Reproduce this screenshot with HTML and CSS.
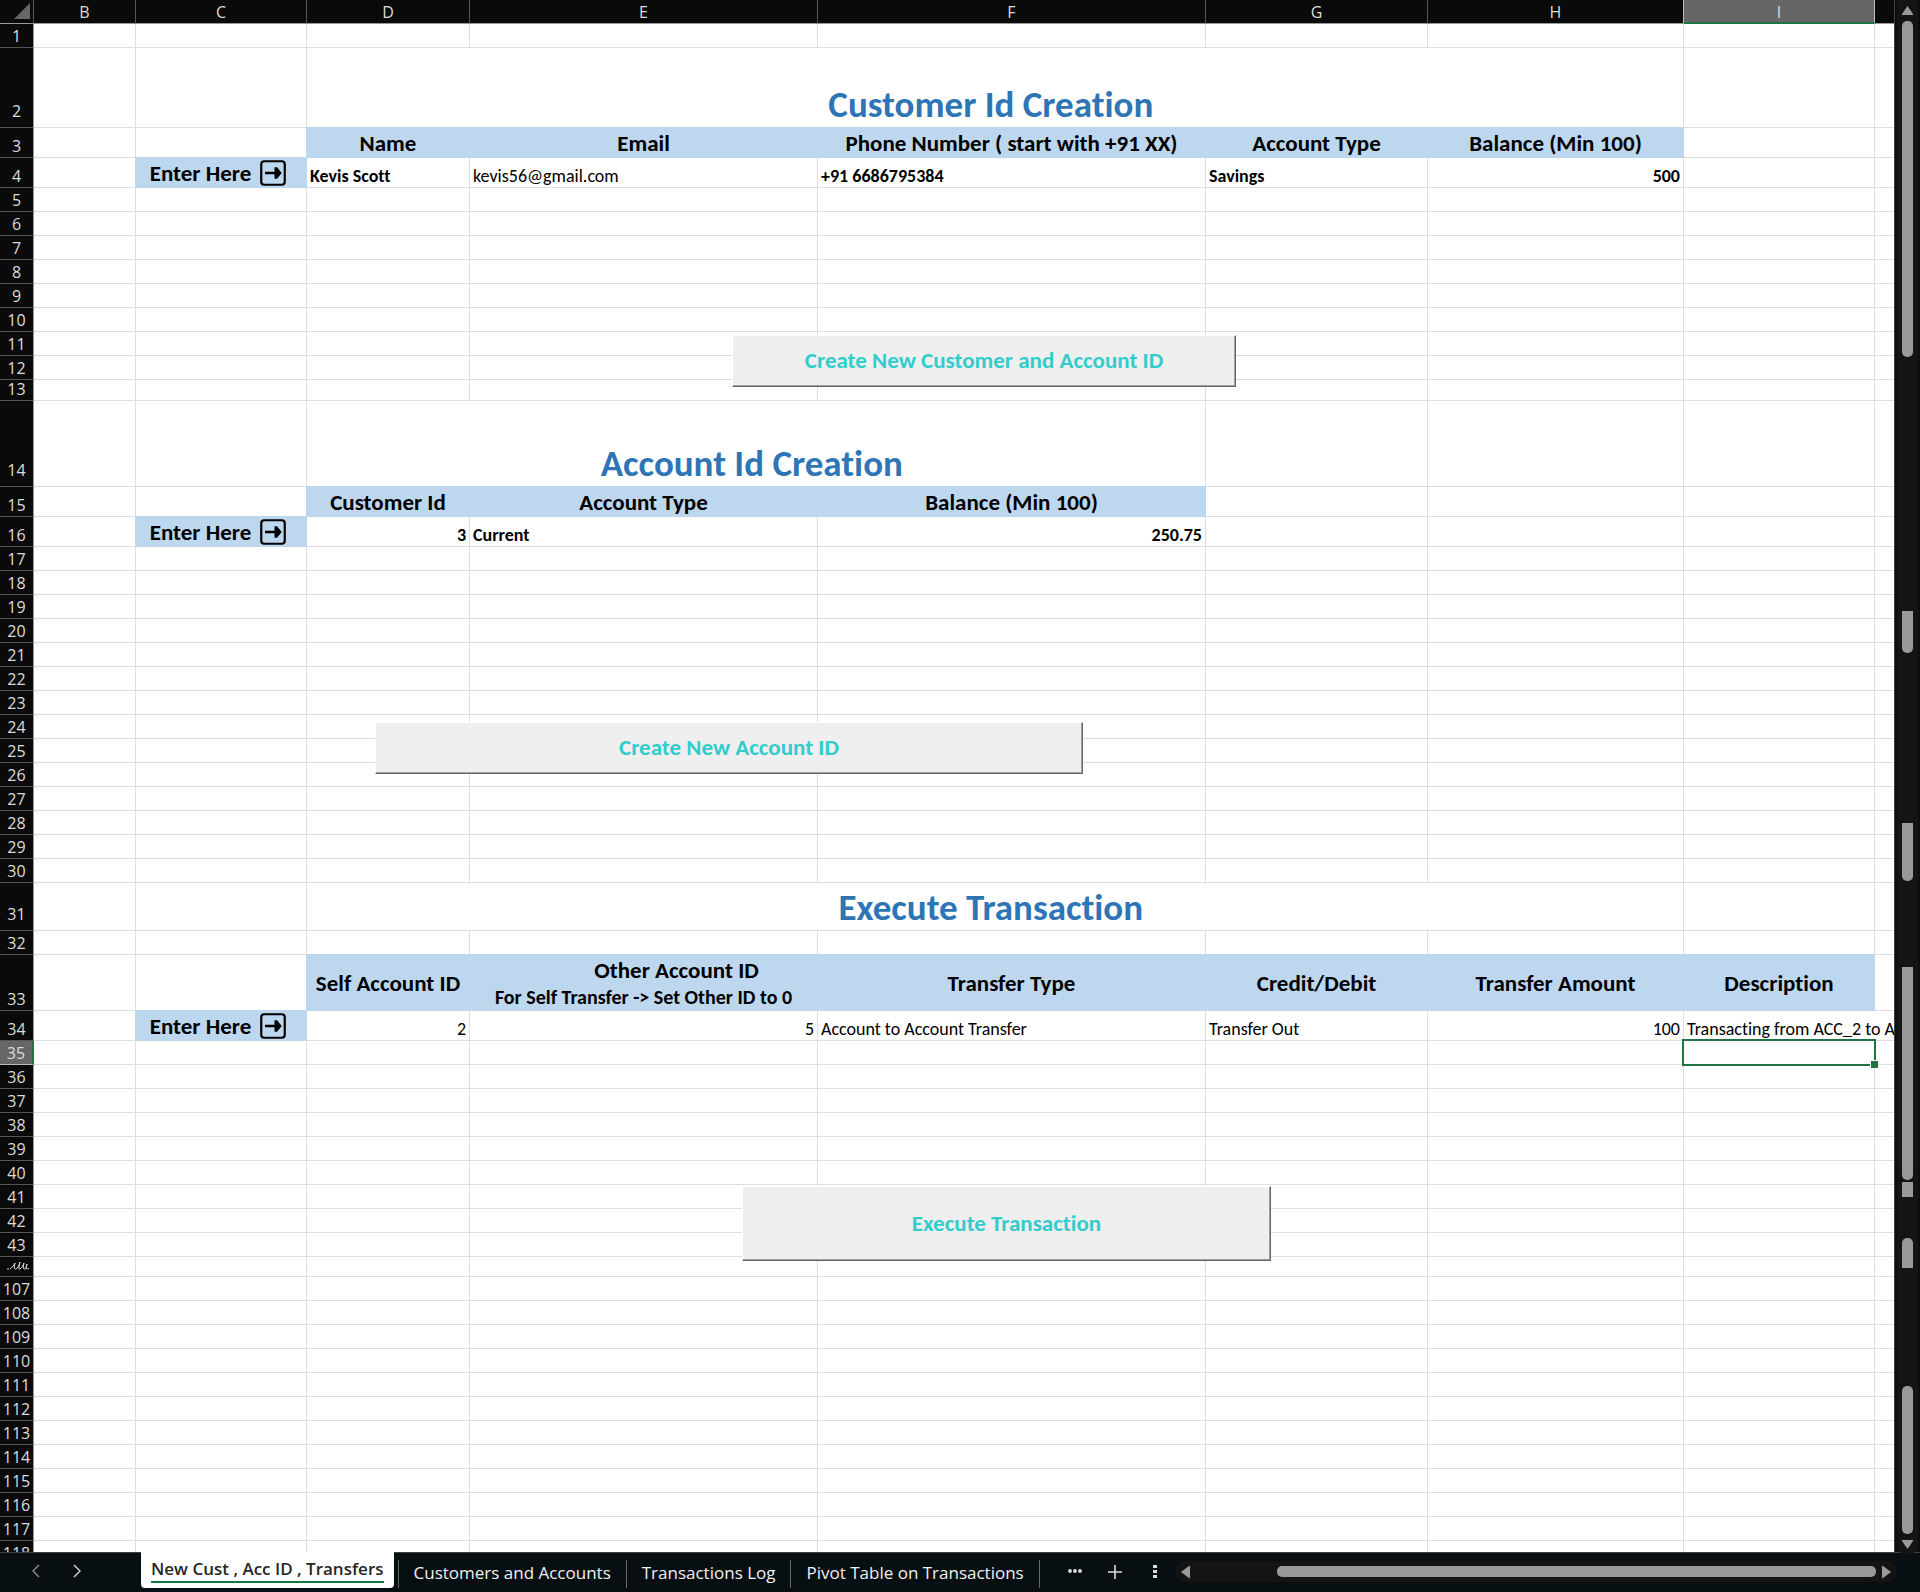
FILE: index.html
```html
<!DOCTYPE html>
<html lang="en">
<head>
<meta charset="utf-8">
<meta name="viewport" content="width=device-width, initial-scale=1">
<title>New Cust , Acc ID , Transfers</title>
<link rel="stylesheet" href="styles.css">
</head>
<body>
<svg class="defs" aria-hidden="true">
  <symbol id="enter-arrow" viewBox="0 0 26 26">
    <rect x="1.25" y="1.25" width="23.5" height="23.5" rx="3" fill="none" stroke="#000" stroke-width="2.2"/>
    <path d="M5 11.7h9.500V7.200h2.600l4.600 5.800-4.600 5.800h-2.600v-4.500H5z" fill="#000"/>
  </symbol>
</svg>
<div class="app">
  <main class="sheet">
    <table class="grid">
      <colgroup>
        <col class="col-head"><col class="col-b"><col class="col-c"><col class="col-d"><col class="col-e">
        <col class="col-f"><col class="col-g"><col class="col-h"><col class="col-i"><col>
      </colgroup>
      <thead>
        <tr>
          <th class="corner" aria-label="Select all"><svg width="16" height="16" viewBox="0 0 16 16" aria-hidden="true"><path d="M16 0v16H0z" fill="#666"/></svg></th>
          <th scope="col">B</th><th scope="col">C</th><th scope="col">D</th><th scope="col">E</th><th scope="col">F</th><th scope="col">G</th><th scope="col" class="before-active">H</th><th scope="col" class="active">I</th><th class="last"></th>
        </tr>
      </thead>
      <tbody>
        <tr><th>1</th><td><td><td><td><td><td><td><td><td></tr>
        <tr class="h80"><th>2</th><td><td><td colspan="5" class="title">Customer Id Creation&nbsp;<td><td></tr>
        <tr class="h30"><th>3</th><td><td><td class="field">Name<td class="field">Email<td class="field">Phone Number ( start with +91 XX)<td class="field">Account Type<td class="field">Balance (Min 100)<td><td></tr>
        <tr class="h30"><th>4</th><td><td class="field"><span class="enter">Enter Here <svg width="26" height="26" aria-hidden="true"><use href="#enter-arrow"/></svg></span><td class="bold">Kevis Scott<td>kevis56@gmail.com<td class="bold">+91 6686795384<td class="bold">Savings<td class="bold num">500<td><td></tr>
        <tr><th>5</th><td><td><td><td><td><td><td><td><td></tr>
        <tr><th>6</th><td><td><td><td><td><td><td><td><td></tr>
        <tr><th>7</th><td><td><td><td><td><td><td><td><td></tr>
        <tr><th>8</th><td><td><td><td><td><td><td><td><td></tr>
        <tr><th>9</th><td><td><td><td><td><td><td><td><td></tr>
        <tr><th>10</th><td><td><td><td><td><td><td><td><td></tr>
        <tr><th>11</th><td><td><td><td class="anchor"><button type="button" class="macro macro-customer">Create New Customer and Account ID</button><td><td><td><td><td></tr>
        <tr><th>12</th><td><td><td><td><td><td><td><td><td></tr>
        <tr class="h21"><th>13</th><td><td><td><td><td><td><td><td><td></tr>
        <tr class="h86"><th>14</th><td><td><td colspan="3" class="title">Account Id Creation&nbsp;<td><td><td><td></tr>
        <tr class="h30"><th>15</th><td><td><td class="field">Customer Id<td class="field">Account Type<td class="field">Balance (Min 100)<td><td><td><td></tr>
        <tr class="h30"><th>16</th><td><td class="field"><span class="enter">Enter Here <svg width="26" height="26" aria-hidden="true"><use href="#enter-arrow"/></svg></span><td class="bold num">3<td class="bold">Current<td class="bold num">250.75<td><td><td><td></tr>
        <tr><th>17</th><td><td><td><td><td><td><td><td><td></tr>
        <tr><th>18</th><td><td><td><td><td><td><td><td><td></tr>
        <tr><th>19</th><td><td><td><td><td><td><td><td><td></tr>
        <tr><th>20</th><td><td><td><td><td><td><td><td><td></tr>
        <tr><th>21</th><td><td><td><td><td><td><td><td><td></tr>
        <tr><th>22</th><td><td><td><td><td><td><td><td><td></tr>
        <tr><th>23</th><td><td><td><td><td><td><td><td><td></tr>
        <tr><th>24</th><td><td><td class="anchor"><button type="button" class="macro macro-account">Create New Account ID</button><td><td><td><td><td><td></tr>
        <tr><th>25</th><td><td><td><td><td><td><td><td><td></tr>
        <tr><th>26</th><td><td><td><td><td><td><td><td><td></tr>
        <tr><th>27</th><td><td><td><td><td><td><td><td><td></tr>
        <tr><th>28</th><td><td><td><td><td><td><td><td><td></tr>
        <tr><th>29</th><td><td><td><td><td><td><td><td><td></tr>
        <tr><th>30</th><td><td><td><td><td><td><td><td><td></tr>
        <tr class="h48"><th>31</th><td><td><td colspan="5" class="title">Execute Transaction&nbsp;<td><td></tr>
        <tr><th>32</th><td><td><td><td><td><td><td><td><td></tr>
        <tr class="h56"><th>33</th><td><td><td class="field middle">Self Account ID<td class="field middle"><span class="indent">Other Account ID</span><span class="hint">For Self Transfer -&gt; Set Other ID to 0</span><td class="field middle">Transfer Type<td class="field middle">Credit/Debit<td class="field middle">Transfer Amount<td class="field middle">Description<td></tr>
        <tr class="h30"><th>34</th><td><td class="field"><span class="enter">Enter Here <svg width="26" height="26" aria-hidden="true"><use href="#enter-arrow"/></svg></span><td class="num">2<td class="num">5<td>Account to Account Transfer<td>Transfer Out<td class="num">100<td colspan="2" class="spill">Transacting from ACC_2 to ACC_5</tr>
        <tr><th class="active">35</th><td><td><td><td><td><td><td><td class="anchor"><div class="selection"></div><td></tr>
        <tr><th>36</th><td><td><td><td><td><td><td><td><td></tr>
        <tr><th>37</th><td><td><td><td><td><td><td><td><td></tr>
        <tr><th>38</th><td><td><td><td><td><td><td><td><td></tr>
        <tr><th>39</th><td><td><td><td><td><td><td><td><td></tr>
        <tr><th>40</th><td><td><td><td><td><td><td><td><td></tr>
        <tr><th>41</th><td><td><td><td class="anchor"><button type="button" class="macro macro-execute">Execute Transaction</button><td><td><td><td><td></tr>
        <tr><th>42</th><td><td><td><td><td><td><td><td><td></tr>
        <tr><th>43</th><td><td><td><td><td><td><td><td><td></tr>
        <tr class="h20"><th><svg class="fold" width="24" height="10" viewBox="0 0 24 10" aria-hidden="true"><path d="M1 8h2M4 8C6 7 8 4 9 2C8 6 8 9 10 8C12 7 13 4 14 1C13 6 12 9 14 8C16 7 17 4 18 2C17 6 17 9 19 8C20 7 20.500 5 21 3C20 7 20 9 23 7.500" fill="none" stroke="#ddd" stroke-width="1"/></svg></th><td><td><td><td><td><td><td><td><td></tr>
        <tr><th>107</th><td><td><td><td><td><td><td><td><td></tr>
        <tr><th>108</th><td><td><td><td><td><td><td><td><td></tr>
        <tr><th>109</th><td><td><td><td><td><td><td><td><td></tr>
        <tr><th>110</th><td><td><td><td><td><td><td><td><td></tr>
        <tr><th>111</th><td><td><td><td><td><td><td><td><td></tr>
        <tr><th>112</th><td><td><td><td><td><td><td><td><td></tr>
        <tr><th>113</th><td><td><td><td><td><td><td><td><td></tr>
        <tr><th>114</th><td><td><td><td><td><td><td><td><td></tr>
        <tr><th>115</th><td><td><td><td><td><td><td><td><td></tr>
        <tr><th>116</th><td><td><td><td><td><td><td><td><td></tr>
        <tr><th>117</th><td><td><td><td><td><td><td><td><td></tr>
        <tr><th>118</th><td><td><td><td><td><td><td><td><td></tr>
      </tbody>
    </table>
  </main>

  <aside class="vscroll" aria-label="Vertical scroll">
    <svg width="11" height="9" viewBox="0 0 11 9" aria-hidden="true"><path d="M5.500 0 11 8v1H0V8z" fill="#999"/></svg>
    <div class="vtrack">
      <i class="thumb t1"></i><i class="thumb t2"></i><i class="thumb t3"></i><i class="thumb t4"></i>
      <i class="thumb t5"></i><i class="thumb t6"></i><i class="thumb t7"></i>
    </div>
    <svg width="11" height="9" viewBox="0 0 11 9" aria-hidden="true"><path d="M5.500 9 11 1V0H0v1z" fill="#999"/></svg>
  </aside>

  <footer class="tabbar">
    <div class="nav">
      <button type="button" aria-label="Previous sheets"><svg width="8" height="14" viewBox="0 0 8 14" aria-hidden="true"><path d="M7 1 1 7l6 6" fill="none" stroke="#888" stroke-width="1.500"/></svg></button>
      <button type="button" aria-label="Next sheets"><svg width="8" height="14" viewBox="0 0 8 14" aria-hidden="true"><path d="M1 1l6 6-6 6" fill="none" stroke="#ccc" stroke-width="1.500"/></svg></button>
    </div>
    <nav class="tabs">
      <a href="#" class="current"><span>New Cust , Acc ID , Transfers</span></a>
      <a href="#">Customers and Accounts</a>
      <a href="#">Transactions Log</a>
      <a href="#">Pivot Table on Transactions</a>
    </nav>
    <div class="tools">
      <button type="button" aria-label="More sheets"><svg width="14" height="14" viewBox="0 0 14 14" fill="#ddd" aria-hidden="true"><circle cx="2" cy="6" r="1.900"/><circle cx="7" cy="6" r="1.900"/><circle cx="12" cy="6" r="1.900"/></svg></button>
      <button type="button" aria-label="New sheet"><svg width="14" height="14" viewBox="0 0 14 14" aria-hidden="true"><path d="M7 0v14M0 7h14" stroke="#ddd" stroke-width="1.600"/></svg></button>
      <button type="button" aria-label="Resize tabs"><svg width="4" height="14" viewBox="0 0 4 14" fill="#ddd" aria-hidden="true"><path d="M0 0h4v3H0zM0 5h4v3H0zM0 10h4v3H0z"/></svg></button>
    </div>
    <div class="hscroll" aria-label="Horizontal scroll">
      <svg width="9" height="12" viewBox="0 0 9 12" aria-hidden="true"><path d="M0 6 8 0h1v12H8z" fill="#999"/></svg>
      <div class="htrack"><i class="thumb"></i></div>
      <svg width="9" height="12" viewBox="0 0 9 12" aria-hidden="true"><path d="M9 6 1 0H0v12h1z" fill="#999"/></svg>
    </div>
  </footer>
</div>
</body>
</html>
```
FILE: styles.css
```css
* { box-sizing: border-box; }

body {
  margin: 0;
  background: #080f12;
  font-family: Calibri, Carlito, Lato, sans-serif;
  font-variant-ligatures: none;
}

button { margin: 0; padding: 0; border: 0; background: none; cursor: pointer; }
svg { display: block; }
.defs { position: absolute; width: 0; height: 0; }

.app {
  display: grid;
  grid-template-columns: minmax(0, 1fr) 25px;
  grid-template-rows: minmax(0, 1fr) 40px;
  height: 100vh;
}

/* Worksheet */
.sheet { overflow: hidden; background: #fff; border-right: 1px solid #3c4042; }

.grid {
  width: 100%;
  table-layout: fixed;
  border-collapse: separate;
  border-spacing: 0;
}

.col-head { width: 34px; }
.col-b { width: 102px; }
.col-c { width: 171px; }
.col-d { width: 163px; }
.col-e { width: 348px; }
.col-f { width: 388px; }
.col-g { width: 222px; }
.col-h { width: 256px; }
.col-i { width: 191px; }

tr { height: 24px; }
.h20 { height: 20px; }
.h21 { height: 21px; }
.h30 { height: 30px; }
.h48 { height: 48px; }
.h56 { height: 56px; }
.h80 { height: 80px; }
.h86 { height: 86px; }

td {
  padding: 0 3px 1px;
  border-right: 1px solid #dedede;
  border-bottom: 1px solid #dedede;
  font-size: 18px;
  line-height: 20px;
  vertical-align: bottom;
  white-space: nowrap;
}
td:last-child { border-right: 0; }

.bold { font-weight: 700; }
.num { text-align: right; }
.spill { overflow: hidden; }

.title {
  padding-bottom: 0;
  color: #2e75b6;
  font-size: 37px;
  font-weight: 700;
  line-height: 44px;
  text-align: center;
}

.field {
  padding-bottom: 0;
  background: #bdd7ee;
  border-color: #bdd7ee;
  box-shadow: -1px -1px 0 #bdd7ee;
  font-size: 23px;
  font-weight: 700;
  line-height: 28px;
  text-align: center;
}
.middle { vertical-align: middle; }
.indent { display: block; padding-left: 66px; }
.hint { display: block; font-size: 20px; line-height: 26px; }

.enter { display: flex; align-items: center; justify-content: center; gap: 9px; padding-right: 6px; }

th {
  padding: 0 0 2px;
  background: #0a0a0a;
  color: #dcdcdc;
  font: 400 16px/18px "Open Sans", "Noto Sans", sans-serif;
  text-align: center;
  vertical-align: bottom;
  border-bottom: 1px solid #555;
  border-right: 1px solid #999;
}
thead th { border-bottom-color: #999; border-right-color: #555; }
thead .last { border-right: 0; }
thead .before-active { border-right-color: #bbb; }
thead .active { padding-bottom: 1px; background: #666; border-right-color: #bbb; border-bottom: 2px solid #217346; }
tbody .active { background: #666; border-bottom-color: #bbb; border-right: 2px solid #217346; }
.h48 th, .h80 th, .h86 th { padding-bottom: 7px; }
.corner { vertical-align: middle; }
.corner svg { margin-left: 14px; }
.fold { margin: 0 auto 3px 6px; }

/* Objects floating over the cells */
.anchor { position: relative; }

.selection {
  position: absolute;
  inset: -2px -2px;
  border: 2px solid #217346;
}
.selection::after {
  content: "";
  position: absolute;
  right: -4px;
  bottom: -4px;
  width: 7px;
  height: 7px;
  background: #217346;
  border: solid #fff;
  border-width: 1px 0 0 1px;
}

.macro {
  position: absolute;
  z-index: 1;
  padding-bottom: 2px;
  background: #efefef;
  border: 1px solid;
  border-color: #fff #666 #666 #fff;
  box-shadow: inset -1px -1px 0 #a0a0a0;
  color: #33cccc;
  font: 700 23px/28px Calibri, Carlito, Lato, sans-serif;
  font-variant-ligatures: none;
}
.macro-customer { top: 3px; left: 262px; width: 504px; height: 52px; }
.macro-account { top: 7px; left: 68px; width: 708px; height: 52px; }
.macro-execute { top: 1px; left: 272px; width: 529px; height: 75px; }

/* Scroll bars */
.thumb { display: block; background: #999; }

.vscroll {
  display: flex;
  flex-direction: column;
  align-items: center;
  gap: 6px;
  margin: 0 2px -3px;
  padding: 6px 0;
  background: #141414;
  border-radius: 0 0 10px 10px;
  z-index: 1;
}
.vtrack {
  flex: 1;
  width: 11px;
  display: grid;
  grid-template-rows: 336fr 254fr 42fr 170fr 58fr 86fr 213fr 2fr 15fr 41fr 30fr 118fr 148fr;
}
.t1 { grid-row: 1; border-radius: 5px; }
.t2 { grid-row: 3; border-radius: 0 0 5px 5px; }
.t3 { grid-row: 5; border-radius: 0 0 5px 5px; }
.t4 { grid-row: 7; border-radius: 0 0 5px 5px; }
.t5 { grid-row: 9; }
.t6 { grid-row: 11; border-radius: 5px 5px 0 0; }
.t7 { grid-row: 13; border-radius: 5px; }

.hscroll {
  flex: 1;
  display: flex;
  align-items: center;
  gap: 6px;
  height: 21px;
  margin: 8px 23px 0 0;
  padding: 0 6px;
  background: #141414;
  border-radius: 10px;
}
.htrack { flex: 1; display: flex; justify-content: flex-end; }
.htrack .thumb { width: 88%; height: 11px; border-radius: 5px; }

/* Sheet tabs */
.tabbar {
  grid-column: 1 / -1;
  display: flex;
  align-items: flex-start;
  border-top: 1px solid #3c4042;
}

.nav { display: flex; gap: 33px; width: 141px; padding: 11px 0 0 32px; }

.tabs { display: flex; font: 400 17px/24px "Open Sans", "Noto Sans", sans-serif; }
.tabs a {
  margin-top: 7px;
  padding: 1px 15px 0;
  border-right: 1px solid #666;
  color: #f0f0f0;
  text-decoration: none;
  white-space: nowrap;
}
.tabs .current {
  margin: -1px 4px 0 0;
  padding: 5px 10px;
  border-right: 0;
  border-radius: 0 0 4px 4px;
  background: #fff;
  color: #262626;
  font-weight: 600;
}
.tabs .current span { display: block; border-bottom: 2px solid #107c41; }
.tabs .current + a { border-left: 1px solid #666; }

.tools { display: flex; align-items: center; gap: 26px; padding: 12px 18px 0 28px; }
.tools button:last-child { margin-left: 5px; }
```
